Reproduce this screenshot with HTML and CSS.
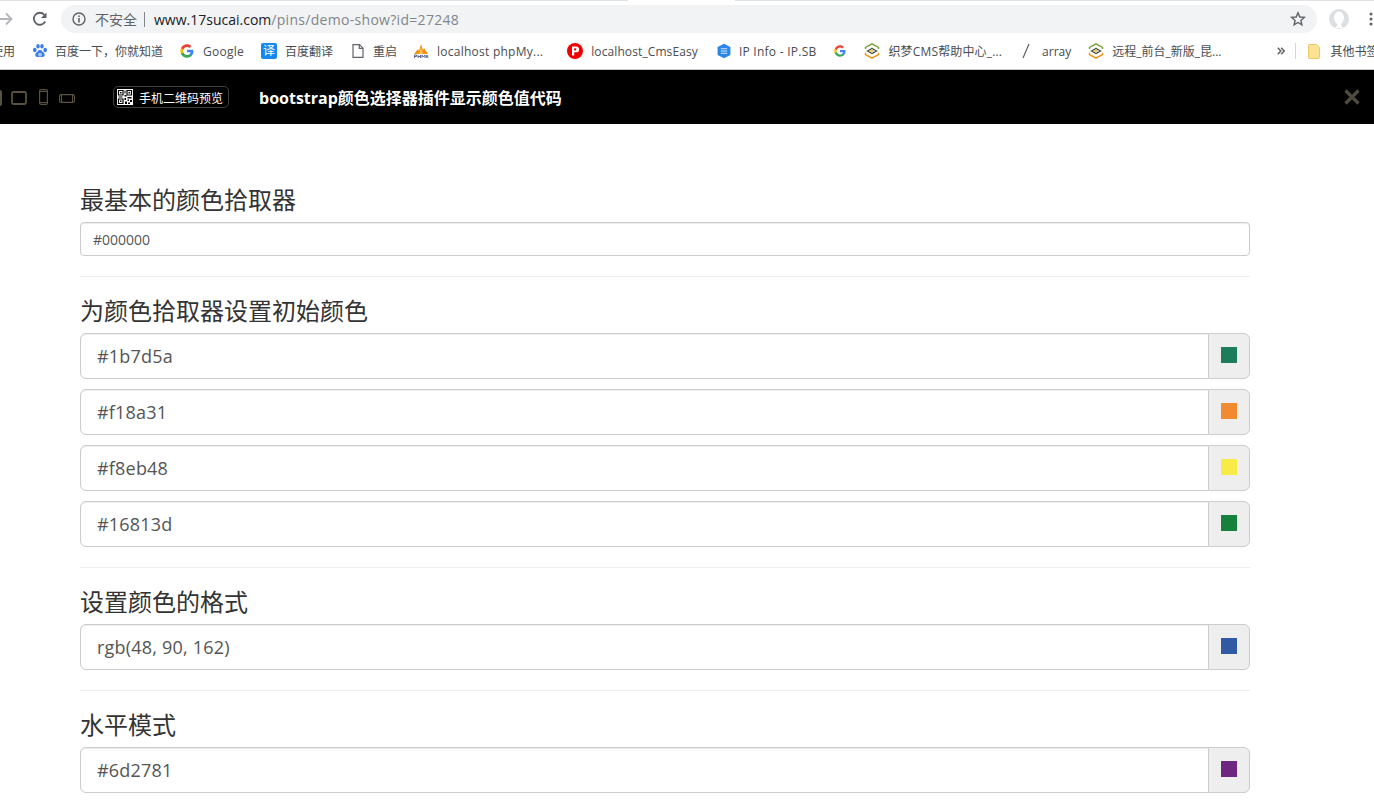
FILE: index.html
```html
<!DOCTYPE html>
<html lang="zh-CN">
<head>
<meta charset="utf-8">
<title>bootstrap颜色选择器插件显示颜色值代码</title>
<link rel="stylesheet" href="styles.css">
</head>
<body>
<div class="tabstrip"><span class="tab-white"></span></div>
<div class="toolbar">
  <svg class="tb-back" width="16" height="16" viewBox="0 0 16 16"><path d="M0 8h13M8 2.500 13.500 8 8 13.500" fill="none" stroke="#b4b6b9" stroke-width="1.800"/></svg>
  <svg class="tb-reload" width="16" height="16" viewBox="0 0 16 16"><path d="M13.200 10.500A6 6 0 1 1 12.400 3.800" fill="none" stroke="#5f6368" stroke-width="1.800"/><path d="M14.500 1.500v5.500H9z" fill="#5f6368"/></svg>
  <div class="omnibox">
    <svg class="tb-info" width="14" height="14" viewBox="0 0 14 14"><circle cx="7" cy="7" r="6" fill="none" stroke="#5f6368" stroke-width="1.400"/><path d="M6.200 6h1.600v4.400H6.200zM6.200 3.400h1.600V5H6.200z" fill="#5f6368"/></svg>
    <span class="insecure">不安全</span>
    <span class="omni-sep"></span>
    <span class="url"><span class="url-host">www.17sucai.com</span>/pins/demo-show?id=27248</span>
    <svg class="tb-star" width="16" height="16" viewBox="0 0 16 16"><path d="M8 1.800 9.800 6l4.500.4-3.400 3 1 4.400L8 11.500l-3.900 2.300 1-4.400-3.400-3L6.200 6z" fill="none" stroke="#5f6368" stroke-width="1.400"/></svg>
  </div>
  <svg class="tb-avatar" width="20" height="20" viewBox="0 0 20 20"><circle cx="10" cy="10" r="10" fill="#dcdfe2"/><ellipse cx="10" cy="9" rx="5" ry="6.500" fill="#fff"/><path d="M6 19c2-2 3-4 3-6h3c0 2 0 4 2 6z" fill="#fff"/></svg>
  <svg class="tb-menu" width="4" height="14" viewBox="0 0 4 14"><circle cx="2" cy="2" r="1.500" fill="#5f6368"/><circle cx="2" cy="7" r="1.500" fill="#5f6368"/><circle cx="2" cy="12" r="1.500" fill="#5f6368"/></svg>
</div>
<div class="bookmarks">
  <span class="bm bm-apps">使用</span>
  <span class="bm bm-baidu"><svg width="16" height="16" viewBox="0 0 16 16"><g fill="#3b7de8"><ellipse cx="2.800" cy="7" rx="1.800" ry="2.300"/><ellipse cx="6" cy="3.200" rx="1.700" ry="2.300"/><ellipse cx="10" cy="3.200" rx="1.700" ry="2.300"/><ellipse cx="13.200" cy="7" rx="1.800" ry="2.300"/><path d="M8 7c2 0 2.500 2 4 3 1.500 1.500.5 4.500-2 4-1-.2-3-.2-4 0-2.500.5-3.500-2.500-2-4C5.500 9 6 7 8 7z"/></g><ellipse cx="8" cy="11.500" rx="2" ry="1.800" fill="#a9c8f5"/></svg>百度一下，你就知道</span>
  <span class="bm bm-google bm-lat"><svg width="14" height="14" viewBox="0 0 48 48"><path fill="#4285f4" d="M46 24.500c0-1.600-.1-3.100-.4-4.500H24v8.500h12.400c-.5 2.900-2.100 5.300-4.600 6.900v5.700h7.400C43.500 36.800 46 31.200 46 24.500z"/><path fill="#34a853" d="M24 47c6.200 0 11.400-2 15.200-5.600l-7.400-5.700c-2 1.400-4.700 2.200-7.800 2.200-6 0-11.100-4-12.900-9.500H3.400v5.900C7.200 41.800 15 47 24 47z"/><path fill="#fbbc05" d="M11.100 28.400c-.5-1.400-.7-2.900-.7-4.400s.3-3 .7-4.400v-5.900H3.400C1.900 16.800 1 20.300 1 24s.9 7.200 2.400 10.300z"/><path fill="#ea4335" d="M24 10.100c3.400 0 6.400 1.200 8.800 3.400l6.600-6.600C35.400 3.200 30.200 1 24 1 15 1 7.200 6.200 3.400 13.700l7.700 5.900C12.900 14.100 18 10.100 24 10.100z"/></svg>Google</span>
  <span class="bm"><i class="ico-yi">译</i>百度翻译</span>
  <span class="bm bm-file"><svg width="12" height="14" viewBox="0 0 12 14"><path d="M1 .7h6.500L11 4.200v9.100H1zM7.300.7v3.700H11" fill="none" stroke="#5f6368" stroke-width="1.200"/></svg>重启</span>
  <span class="bm bm-lat bm-pma"><svg width="16" height="16" viewBox="0 0 16 16"><path d="M1 11 5 6l1 2 2-7 2 6 1-2 4 6z" fill="#f29111"/><path d="M6 11 8 4l2 7z" fill="#f8c15c"/><rect x="1" y="11.500" width="14" height="3.500" fill="#fff"/><path d="M1.500 15v-3h2v1.500h-2M5 12v3M7.500 12v3M5 13.500h2.500M9 15v-3l1.500 2 1.500-2v3M13 15l1-3 1 3" fill="none" stroke="#3a4a7a" stroke-width=".8"/></svg>localhost phpMy...</span>
  <span class="bm bm-p"><svg width="16" height="16" viewBox="0 0 16 16"><circle cx="8" cy="8" r="8" fill="#f00000"/><path d="M5 3.500h4.200a2.900 2.900 0 0 1 0 5.800H7.200v3.200H5z" fill="#fff"/><rect x="7.200" y="5.300" width="2" height="2.200" fill="#f00000"/></svg>localhost_CmsEasy</span>
  <span class="bm bm-lat bm-ip"><svg width="14" height="16" viewBox="0 0 14 16"><path d="M7 .8 13.400 4v8L7 15.200.6 12V4z" fill="#2a86e8"/><path d="M3.800 5.800h6.400M3.800 8h6.400M3.800 10.200h6.400" stroke="#cfe4fb" stroke-width="1.100"/></svg>IP Info - IP.SB</span>
  <span class="bm bm-g2"><svg width="12" height="12" viewBox="0 0 48 48"><path fill="#4285f4" d="M46 24.500c0-1.600-.1-3.100-.4-4.500H24v8.500h12.400c-.5 2.900-2.100 5.300-4.600 6.900v5.700h7.400C43.500 36.800 46 31.200 46 24.500z"/><path fill="#34a853" d="M24 47c6.200 0 11.400-2 15.200-5.600l-7.400-5.700c-2 1.400-4.700 2.200-7.800 2.200-6 0-11.100-4-12.900-9.500H3.400v5.900C7.200 41.800 15 47 24 47z"/><path fill="#fbbc05" d="M11.100 28.400c-.5-1.400-.7-2.900-.7-4.400s.3-3 .7-4.400v-5.900H3.400C1.900 16.800 1 20.300 1 24s.9 7.200 2.400 10.300z"/><path fill="#ea4335" d="M24 10.100c3.400 0 6.400 1.200 8.800 3.400l6.600-6.600C35.400 3.200 30.200 1 24 1 15 1 7.200 6.200 3.400 13.700l7.700 5.900C12.900 14.100 18 10.100 24 10.100z"/></svg></span>
  <span class="bm bm-g2 bm-dede"><svg width="16" height="16" viewBox="0 0 16 16"><path d="M1.500 6V4.500L8 .9l6.500 3.600V6" fill="none" stroke="#78a22f" stroke-width="1.400"/><path d="M3.500 8 8 5.400 12.500 8 8 10.600z" fill="none" stroke="#4f4f48" stroke-width="1.300"/><path d="M6 8h4" stroke="#e8b020" stroke-width="1.200"/><path d="M1.500 10v1.500L8 15.100l6.500-3.600V10" fill="none" stroke="#f08c14" stroke-width="1.400"/></svg>织梦CMS帮助中心_...</span>
  <span class="bm bm-slash"><svg width="8" height="16" viewBox="0 0 8 16"><path d="M7 1 1 15" stroke="#555" stroke-width="1.100"/></svg>array</span>
  <span class="bm"><svg width="16" height="16" viewBox="0 0 16 16"><path d="M1.500 6V4.500L8 .9l6.500 3.600V6" fill="none" stroke="#78a22f" stroke-width="1.400"/><path d="M3.500 8 8 5.400 12.500 8 8 10.600z" fill="none" stroke="#4f4f48" stroke-width="1.300"/><path d="M6 8h4" stroke="#e8b020" stroke-width="1.200"/><path d="M1.500 10v1.500L8 15.100l6.500-3.600V10" fill="none" stroke="#f08c14" stroke-width="1.400"/></svg>远程_前台_新版_昆...</span>
  <svg class="bm-more" width="8" height="8" viewBox="0 0 8 8"><path d="M.8.800 3.800 4l-3 3.200M4.200.800 7.200 4l-3 3.200" fill="none" stroke="#5f6368" stroke-width="1.500"/></svg>
  <span class="bm-sep"></span>
  <span class="bm bm-folder"><svg width="12" height="15" viewBox="0 0 12 15"><path d="M.6 1.500a1 1 0 0 1 1-1h7l2.800 2.800v10.200a1 1 0 0 1-1 1H1.600a1 1 0 0 1-1-1z" fill="#fde293" stroke="#eec55f"/></svg>其他书签</span>
</div>
<header class="demobar">
  <div class="devices">
    <svg class="dev-full" width="16" height="16" viewBox="0 0 16 16"><rect x="1" y="1" width="14" height="14" rx="1" fill="none" stroke="#5a5141" stroke-width="2"/></svg>
    <svg class="dev-pad" width="16" height="14" viewBox="0 0 16 14"><rect x="1" y="1" width="14" height="12" rx="1.500" fill="none" stroke="#5a5141" stroke-width="1.800"/></svg>
    <svg class="dev-phone" width="9" height="16" viewBox="0 0 9 16"><rect x=".6" y=".6" width="7.800" height="14.800" rx="1.500" fill="none" stroke="#5a5141" stroke-width="1.200"/><path d="M1 2.500h7M1 13.500h7" stroke="#5a5141"/></svg>
    <svg width="16" height="9" viewBox="0 0 16 9"><rect x=".6" y=".6" width="14.800" height="7.800" rx="1.500" fill="none" stroke="#5a5141" stroke-width="1.200"/><path d="M2.500 1v7M13.500 1v7" stroke="#5a5141"/></svg>
  </div>
  <span class="qr-btn">
    <svg width="16" height="16" viewBox="0 0 16 16"><rect width="16" height="16" fill="#fff"/><path d="M1.500 1.500h4.500v4.500H1.500zM10 1.500h4.500v4.500H10zM1.500 10h4.500v4.500H1.500z" fill="none" stroke="#000" stroke-width="1.200"/><path d="M3 3h1.500v1.500H3zM11.500 3h1.500v1.500h-1.500zM3 11.500h1.500v1.500H3zM7.500 1.500h1v3h-1zM7.500 6h2v1.500h-2zM1.500 7.500h4v1h-4zM7.500 9h1.500v2H7.500zM10.500 8h4v1.500h-4zM10.500 10.500h1.500v1.500h-1.500zM13 11h2v2h-2zM8 12.500h2V15H8zM11 13.500h2V15h-2z" fill="#000"/></svg>
    <span class="qr-label">手机二维码预览</span>
  </span>
  <h1 class="demo-title">bootstrap颜色选择器插件显示颜色值代码</h1>
  <svg class="demo-close" width="16" height="16" viewBox="0 0 16 16"><path d="M1.500 1.500l13 13M14.500 1.500l-13 13" stroke="#4f4b3e" stroke-width="3.200"/></svg>
</header>
<main class="container">
  <h3>最基本的颜色拾取器</h3>
  <div class="input-sm-row"><input class="form-control" value="#000000"></div>
  <hr>
  <h3>为颜色拾取器设置初始颜色</h3>
  <div class="input-group"><input class="form-control-lg" value="#1b7d5a"><span class="addon"><i class="swatch" style="background:#1b7d5a"></i></span></div>
  <div class="input-group"><input class="form-control-lg" value="#f18a31"><span class="addon"><i class="swatch" style="background:#f18a31"></i></span></div>
  <div class="input-group"><input class="form-control-lg" value="#f8eb48"><span class="addon"><i class="swatch" style="background:#f8eb48"></i></span></div>
  <div class="input-group"><input class="form-control-lg" value="#16813d"><span class="addon"><i class="swatch" style="background:#16813d"></i></span></div>
  <hr>
  <h3>设置颜色的格式</h3>
  <div class="input-group"><input class="form-control-lg" value="rgb(48, 90, 162)"><span class="addon"><i class="swatch" style="background:#305aa2"></i></span></div>
  <hr>
  <h3>水平模式</h3>
  <div class="input-group"><input class="form-control-lg" value="#6d2781"><span class="addon"><i class="swatch" style="background:#6d2781"></i></span></div>
</main>
</body>
</html>
```
FILE: styles.css
```css
* { box-sizing: border-box; }
html, body { margin: 0; height: 812px; overflow: hidden; background: #fff; }
body { font-family: "Open Sans", "Noto Sans CJK SC", sans-serif; color: #333; }

.tabstrip { height: 1px; background: #dfe1e5; display: flex; }
.tab-white { width: 107px; height: 1px; background: #fff; margin-left: 628px; }

.toolbar { height: 32px; padding-top: 4px; display: flex; align-items: center; }
.tb-back { margin-left: -2px; flex: none; }
.tb-reload { margin-left: 18px; flex: none; }
.omnibox {
  margin-left: 13px; width: 1256px; height: 28px; border-radius: 14px; background: #f1f3f4;
  display: flex; align-items: center; padding: 0 11px; flex: none;
}
.insecure { margin-left: 9px; font-size: 14px; color: #5f6368; }
.omni-sep { width: 1px; height: 15px; background: #80868b; margin: 0 9px 0 7px; }
.url { font-size: 14px; color: #80868b; letter-spacing: .3px; }
.url-host { color: #202124; letter-spacing: 0; }
.tb-star { margin-left: auto; }
.tb-avatar { margin-left: 12px; flex: none; }
.tb-menu { margin-left: 20px; flex: none; }

.bookmarks {
  height: 37px; border-bottom: 1px solid #c9cacb; display: flex; align-items: center;
  gap: 17px; white-space: nowrap; overflow: hidden; font-size: 12px; color: #494c50;
}
.bm { display: inline-flex; align-items: center; gap: 8px; flex: none; }
.bm svg { flex: none; }
.bm-lat { letter-spacing: .25px; }
.bm-apps { margin-left: -9px; }
.bm-baidu { gap: 7px; }
.bm-google { gap: 9px; }
.bm-file { margin-left: 2px; gap: 9px; }
.bm-pma { margin-left: -1px; }
.bm-p { margin-left: 7px; letter-spacing: .1px; }
.bm-ip { margin-left: 2px; }
.bm-g2 { margin-left: 1px; }
.bm-dede { letter-spacing: .15px; }
.bm-slash { margin-left: 3px; gap: 12px; }
.ico-yi {
  width: 16px; height: 16px; background: #1688f5; color: #fff; border-radius: 2px; font-style: normal;
  font-size: 12px; line-height: 16px; text-align: center; display: block;
}
.bm-more { margin-left: 39px; flex: none; }
.bm-sep { width: 1px; height: 16px; background: #d4d5d6; flex: none; margin-left: -7px; }
.bm-folder { margin-left: -5px; gap: 10px; }

.demobar { height: 54px; background: #000; display: flex; align-items: center; color: #fff; }
.devices { display: flex; align-items: center; margin: 2px 0 0 -14px; gap: 11px; width: 127px; flex: none; }
.devices svg { flex: none; display: block; }
.dev-full { margin-right: -2px; }
.dev-pad { margin-right: 1px; }
.dev-phone { margin-top: -2px; }
.qr-btn {
  width: 116px; height: 22px; border: 1px solid #3f3f3f; border-radius: 5px; display: flex; align-items: center;
  padding-left: 3px; gap: 6px; font-size: 12px; color: #fff; white-space: nowrap; flex: none;
}
.qr-label { position: relative; top: 1px; }
.demo-title { margin: 2px 0 0 30px; font-size: 16px; font-weight: 700; color: #fff; line-height: 1; }
.demo-close { margin-left: auto; margin-right: 14px; flex: none; }

.container { width: 1170px; margin-left: 80px; padding-top: 62px; }
h3 { margin: 0 0 8px; font-size: 24px; font-weight: 400; line-height: 28px; color: #333; }
hr { margin: 20px 0; border: 0; border-top: 1px solid #eee; height: 1px; }
.form-control {
  display: block; width: 100%; height: 34px; padding: 6px 12px; font: 14px "Open Sans", sans-serif; color: #555;
  border: 1px solid #ccc; border-radius: 4px; background: #fff; box-shadow: inset 0 1px 1px rgba(0,0,0,.075);
}
.input-group { display: flex; height: 46px; margin-bottom: 10px; }
.input-group:has(+ hr) { margin-bottom: 0; }
.form-control-lg {
  flex: 1; min-width: 0; height: 46px; padding: 10px 16px; font: 18px "Open Sans", sans-serif; color: #555;
  letter-spacing: .2px; border: 1px solid #ccc; border-radius: 6px 0 0 6px; background: #fff;
  box-shadow: inset 0 1px 1px rgba(0,0,0,.075);
}
.addon {
  width: 42px; flex: none; margin-left: -1px; background: #eee; border: 1px solid #ccc; border-radius: 0 6px 6px 0;
  display: flex; align-items: center; justify-content: center;
}
.swatch { display: block; width: 16px; height: 16px; margin-bottom: 2px; }
```
